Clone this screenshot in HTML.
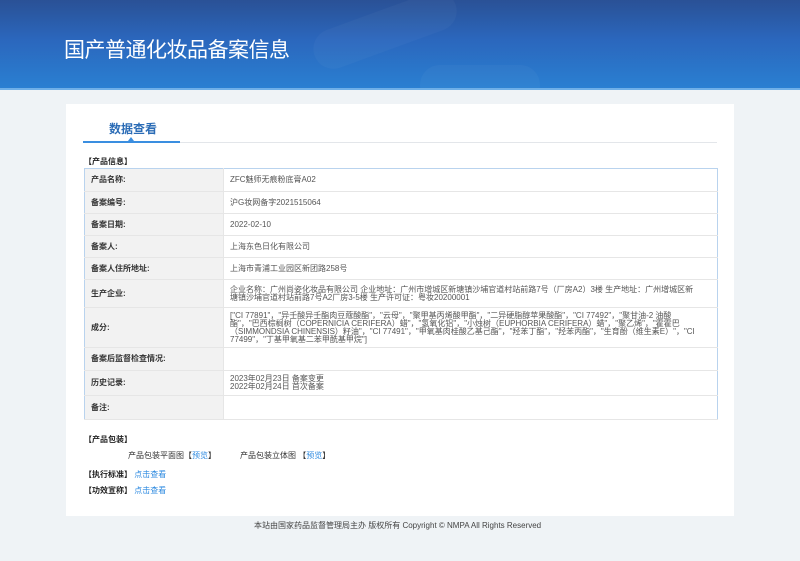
<!DOCTYPE html>
<html><head><meta charset="utf-8"><style>
*{margin:0;padding:0;box-sizing:border-box}
body{width:800px;height:561px;background:#eff3f6;font-family:"Liberation Sans","Noto Sans CJK SC",sans-serif;color:#333;position:relative;overflow:hidden}
.hd{position:absolute;left:0;top:0;width:800px;height:89px;background:linear-gradient(180deg,#2a5196 0%,#2b67bd 45%,#2a80d2 100%);overflow:hidden}
.hd .b{position:absolute;background:rgba(255,255,255,0.03);border-radius:20px}
.hd h1{position:absolute;left:64px;top:34px;font-size:21px;font-weight:normal;color:#fff;letter-spacing:-0.5px}
.line{position:absolute;top:88px;left:0;width:800px;height:2px;background:#6fb0e8}
.card{position:absolute;left:66px;top:104px;width:668px;height:412px;background:#fff}
.tab{position:absolute;left:43px;top:16px;font-size:12px;font-weight:bold;color:#2b6cb6}
.tl{position:absolute;left:17px;top:38px;width:634px;height:1px;background:#e3e6ea}
.tb{position:absolute;left:17px;top:37px;width:97px;height:2px;background:#3a8ee0}
.tri{position:absolute;left:62px;top:33px;width:0;height:0;border-left:3px solid transparent;border-right:3px solid transparent;border-bottom:4px solid #3a8ee0}
.sec{position:absolute;font-size:8px;font-weight:bold;color:#222}
table{position:absolute;left:18px;top:64px;width:634px;border-collapse:collapse;border:1px solid #b9d3ee;font-size:8px}
td{border-bottom:1px solid #e6e6e6;vertical-align:middle;color:#555;line-height:8px}
td.l{width:139px;background:#f2f2f2;font-weight:bold;color:#333;padding-left:6px;border-right:1px solid #e6e6e6}
td.v{padding-left:6px;padding-right:20px}
.lk{color:#2d8ae0}
.ft{position:absolute;top:520px;left:254px;font-size:8px;color:#444}
</style></head><body>
<div class="hd">
<div class="b" style="left:310px;top:10px;width:150px;height:40px;transform:rotate(-20deg)"></div>
<div class="b" style="left:420px;top:65px;width:120px;height:40px"></div>
<h1>国产普通化妆品备案信息</h1>
</div>
<div class="line"></div>
<div class="card">
<div class="tab">数据查看</div>
<div class="tl"></div><div class="tb"></div><div class="tri"></div>
<div class="sec" style="left:18px;top:52px">【产品信息】</div>
<table>
<tr style="height:23px"><td class="l">产品名称:</td><td class="v">ZFC魅师无痕粉底膏A02</td></tr>
<tr style="height:22px"><td class="l">备案编号:</td><td class="v">沪G妆网备字2021515064</td></tr>
<tr style="height:22px"><td class="l">备案日期:</td><td class="v">2022-02-10</td></tr>
<tr style="height:22px"><td class="l">备案人:</td><td class="v">上海东色日化有限公司</td></tr>
<tr style="height:22px"><td class="l">备案人住所地址:</td><td class="v">上海市青浦工业园区新团路258号</td></tr>
<tr style="height:28px"><td class="l">生产企业:</td><td class="v">企业名称：广州尚姿化妆品有限公司 企业地址：广州市增城区新塘镇沙埔官道村站前路7号（厂房A2）3楼 生产地址：广州增城区新塘镇沙埔官道村站前路7号A2厂房3-5楼 生产许可证：粤妆20200001</td></tr>
<tr style="height:40px"><td class="l">成分:</td><td class="v">["CI 77891"，"异壬酸异壬酯肉豆蔻酸酯"，"云母"，"聚甲基丙烯酸甲酯"，"二异硬脂醇苹果酸酯"，"CI 77492"，"聚甘油-2 油酸酯"，"巴西棕榈树（COPERNICIA CERIFERA）蜡"，"氢氧化铝"，"小烛树（EUPHORBIA CERIFERA）蜡"，"聚乙烯"，"霍霍巴（SIMMONDSIA CHINENSIS）籽油"，"CI 77491"，"甲氧基肉桂酸乙基己酯"，"羟苯丁酯"，"羟苯丙酯"，"生育酚（维生素E）"，"CI 77499"，"丁基甲氧基二苯甲酰基甲烷"]</td></tr>
<tr style="height:23px"><td class="l">备案后监督检查情况:</td><td class="v"></td></tr>
<tr style="height:25px"><td class="l">历史记录:</td><td class="v">2023年02月23日 备案变更<br>2022年02月24日 首次备案</td></tr>
<tr style="height:24px"><td class="l">备注:</td><td class="v"></td></tr>
</table>
<div class="sec" style="left:18px;top:330px">【产品包装】</div>
<div style="position:absolute;left:62px;top:346px;font-size:8px;color:#333">产品包装平面图【<span class="lk">预览</span>】</div>
<div style="position:absolute;left:174px;top:346px;font-size:8px;color:#333">产品包装立体图 【<span class="lk">预览</span>】</div>
<div class="sec" style="left:18px;top:365px">【执行标准】 <span class="lk" style="font-weight:normal">点击查看</span></div>
<div class="sec" style="left:18px;top:381px">【功效宣称】 <span class="lk" style="font-weight:normal">点击查看</span></div>
</div>
<div class="ft">本站由国家药品监督管理局主办 版权所有 Copyright © NMPA All Rights Reserved</div>
</body></html>
